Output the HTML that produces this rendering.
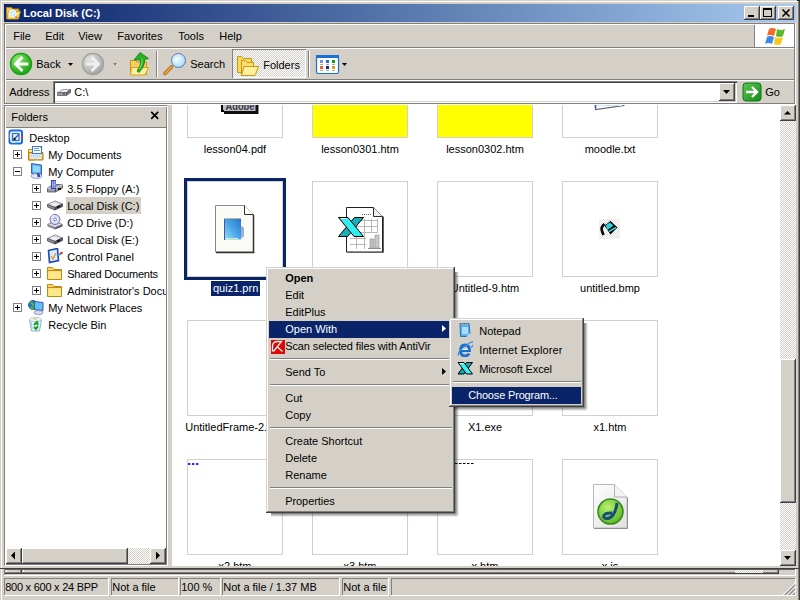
<!DOCTYPE html>
<html><head><meta charset="utf-8">
<style>
*{margin:0;padding:0;box-sizing:border-box}
html,body{width:800px;height:600px;overflow:hidden;background:#d4d0c8;font:11px "Liberation Sans",sans-serif;color:#000}
.a{position:absolute}
.t{position:absolute;line-height:12px;white-space:nowrap;margin-left:-0.8px}
.tc{margin-left:0}
.hl{position:absolute;background:#fff}
.sh{position:absolute;background:#808080}
.dk{position:absolute;background:#404040}
.chk{background:repeating-conic-gradient(#fff 0 25%,#d4d0c8 0 50%) 0 0/2px 2px}
.btn{position:absolute;background:#d4d0c8;box-shadow:inset -1px -1px #404040,inset 1px 1px #fff,inset -2px -2px #808080,inset 2px 2px #d4d0c8}
.pb{position:absolute;box-shadow:inset -1px -1px #fff,inset 1px 1px #808080}
</style></head><body>
<!-- window frame -->
<div class="hl" style="left:1px;top:1px;width:797px;height:1px"></div>
<div class="hl" style="left:1px;top:1px;width:1px;height:599px"></div>
<div class="sh" style="left:798px;top:0;width:1px;height:600px"></div>
<div class="dk" style="left:799px;top:0;width:1px;height:600px"></div>
<div class="a" style="left:797px;top:0;width:3px;height:1px;background:#202020"></div>

<!-- title bar -->
<div class="a" style="left:4px;top:4px;width:792px;height:18px;background:linear-gradient(to right,#0a246a,#a6caf0)"></div>
<svg class="a" style="left:5px;top:5px" width="17" height="16" viewBox="0 0 17 16">
 <path d="M1.5 2.5h5l1 1.5h6.5v9.5h-12.5z" fill="#f0c850" stroke="#b88818" stroke-width="1"/>
 <path d="M3.5 6.5h12l-2.5 7.5h-11z" fill="#f8e070" stroke="#c89818" stroke-width="1"/>
 <circle cx="7.5" cy="8.5" r="3.6" fill="#c8ecfc" stroke="#f8f8f8" stroke-width="1"/>
 <path d="M6 10l3-3" stroke="#fff" stroke-width="1"/>
 <path d="M10.5 11.5l1.5 1.5" stroke="#e05030" stroke-width="1.2"/>
</svg>
<div class="t" style="left:24px;top:7px;color:#fff;font-weight:bold">Local Disk (C:)</div>
<div class="btn" style="left:744px;top:6px;width:16px;height:14px"></div>
<div class="a" style="left:748px;top:15px;width:6px;height:2px;background:#000"></div>
<div class="btn" style="left:760px;top:6px;width:16px;height:14px"></div>
<div class="a" style="left:763px;top:8px;width:9px;height:9px;border:1px solid #000;border-top-width:2px"></div>
<div class="btn" style="left:778px;top:6px;width:16px;height:14px"></div>
<svg class="a" style="left:778px;top:6px" width="16" height="14" viewBox="0 0 16 14">
 <path d="M4.5 3.5l7 7M11.5 3.5l-7 7" stroke="#000" stroke-width="1.6"/>
</svg>

<!-- rebar bands -->
<div class="sh" style="left:4px;top:23px;width:791px;height:1px"></div>
<div class="hl" style="left:5px;top:24px;width:790px;height:1px"></div>
<div class="sh" style="left:4px;top:23px;width:1px;height:82px"></div>
<div class="hl" style="left:5px;top:24px;width:1px;height:81px"></div>
<div class="sh" style="left:794px;top:23px;width:1px;height:82px"></div>
<div class="hl" style="left:795px;top:23px;width:1px;height:82px"></div>
<div class="sh" style="left:6px;top:47px;width:788px;height:1px"></div>
<div class="hl" style="left:6px;top:48px;width:788px;height:1px"></div>
<div class="sh" style="left:6px;top:79px;width:788px;height:1px"></div>
<div class="hl" style="left:6px;top:80px;width:788px;height:1px"></div>
<div class="sh" style="left:4px;top:103px;width:791px;height:1px"></div>
<div class="hl" style="left:4px;top:104px;width:791px;height:1px"></div>

<!-- menu bar -->
<div class="t" style="left:14px;top:30px">File</div>
<div class="t" style="left:46px;top:30px">Edit</div>
<div class="t" style="left:79px;top:30px">View</div>
<div class="t" style="left:118px;top:30px">Favorites</div>
<div class="t" style="left:179px;top:30px">Tools</div>
<div class="t" style="left:220px;top:30px">Help</div>
<div class="sh" style="left:754px;top:25px;width:1px;height:22px"></div>
<div class="hl" style="left:755px;top:25px;width:1px;height:22px"></div>
<div class="a" style="left:756px;top:24px;width:38px;height:23px;background:#fff"></div>
<div class="sh" style="left:756px;top:23px;width:38px;height:1px"></div>
<div class="sh" style="left:756px;top:47px;width:38px;height:1px"></div>
<svg class="a" style="left:765px;top:26px" width="22" height="20" viewBox="0 0 22 20">
 <path d="M4 3q3-2 7 0l-2 7q-4-2-7 0z" fill="#f06a28"/>
 <path d="M12 3q4 2 8 0l-2 7q-4 2-7 0z" fill="#5cb82c"/>
 <path d="M2 11q3-2 7 0l-2 7q-4-2-7 0z" fill="#3a8ce8"/>
 <path d="M10 11q4 2 8 0l-2 7q-4 2-7 0z" fill="#f8c820"/>
</svg>

<!-- toolbar -->

<svg class="a" style="left:0;top:49px" width="360" height="30" viewBox="0 49 360 30">
 <defs>
  <radialGradient id="gb" cx="0.35" cy="0.3" r="0.8"><stop offset="0" stop-color="#9ee878"/><stop offset="0.6" stop-color="#3cb82a"/><stop offset="1" stop-color="#1a9a14"/></radialGradient>
  <radialGradient id="gg" cx="0.35" cy="0.3" r="0.8"><stop offset="0" stop-color="#e4e4e4"/><stop offset="0.7" stop-color="#b4b4b4"/><stop offset="1" stop-color="#9a9a9a"/></radialGradient>
  <linearGradient id="fy" x1="0" y1="0" x2="1" y2="1"><stop offset="0" stop-color="#fff0a0"/><stop offset="1" stop-color="#f0c040"/></linearGradient>
  <radialGradient id="lens" cx="0.4" cy="0.4" r="0.7"><stop offset="0" stop-color="#f4fcff"/><stop offset="0.7" stop-color="#b8e4f8"/><stop offset="1" stop-color="#90c8e8"/></radialGradient>
 </defs>
 <!-- back -->
 <circle cx="21" cy="64" r="10.6" fill="url(#gb)" stroke="#14a014" stroke-width="1.2"/>
 <path d="M21.5 58L15.5 64L21.5 70M16 64H27" fill="none" stroke="#fff" stroke-width="2.8" stroke-linecap="square"/>
 <path d="M68 63h5l-2.5 3z" fill="#000"/>
 <!-- forward -->
 <circle cx="93" cy="64" r="10.6" fill="url(#gg)" stroke="#a0a0a0" stroke-width="1.2"/>
 <path d="M92.5 58L98.5 64L92.5 70M87 64H98" fill="none" stroke="#f0f0f0" stroke-width="2.8" stroke-linecap="square"/>
 <path d="M113 63h5l-2.5 3z" fill="#808080"/>
 <path d="M116 66l2-3" stroke="#fff" stroke-width="1"/>
 <!-- up -->
 <path d="M130.5 60.5h5l1.5 1.5h9.5v12.5h-16z" fill="#f4d060" stroke="#d09810" stroke-width="1"/>
 <path d="M131.5 67.5h17l-3.5 7.5h-14.5z" fill="#fdeea0" stroke="#d8a018" stroke-width="1"/>
 <path d="M134 60L140 52.5L148.5 58.5L144.5 59.5Q145 66.5 139 72.5L137 71Q141.5 65.5 140.5 60z" fill="#28b028" stroke="#0a800a" stroke-width="0.8"/>
 <path d="M142 58.5Q143 64 139.5 69" fill="none" stroke="#80e070" stroke-width="1"/>
 <!-- separators -->
 <rect x="156" y="51" width="1" height="26" fill="#808080"/><rect x="157" y="51" width="1" height="26" fill="#fff"/>
 <!-- search -->
 <path d="M165 73.5L171.5 67" stroke="#a05a20" stroke-width="3.6" stroke-linecap="round"/>
 <path d="M165 73.5L171.5 67" stroke="#f0a030" stroke-width="2.2" stroke-linecap="round"/>
 <circle cx="178.5" cy="60.5" r="7" fill="url(#lens)" stroke="#5878b8" stroke-width="1"/>
 <!-- folders pressed -->
 <rect x="308" y="51" width="1" height="26" fill="#808080"/><rect x="309" y="51" width="1" height="26" fill="#fff"/>
 <!-- views -->
 <rect x="316.5" y="55.5" width="22" height="18" rx="1.5" fill="#fff" stroke="#1870d8" stroke-width="1.2"/>
 <rect x="316" y="55" width="23" height="3" fill="#1870d8"/>
 <rect x="320" y="60" width="3" height="3" fill="#8890d0"/><rect x="326" y="60" width="3" height="3" fill="#1078e0"/><rect x="332" y="60" width="3" height="3" fill="#10a010"/>
 <rect x="320" y="66" width="3" height="3" fill="#f06030"/><rect x="326" y="66" width="3" height="3" fill="#202880"/><rect x="332" y="66" width="3" height="3" fill="#d8a018"/>
 <rect x="320" y="64" width="3" height="1" fill="#aaa"/><rect x="326" y="64" width="3" height="1" fill="#aaa"/><rect x="332" y="64" width="3" height="1" fill="#aaa"/>
 <rect x="320" y="70" width="3" height="1" fill="#aaa"/><rect x="326" y="70" width="3" height="1" fill="#aaa"/><rect x="332" y="70" width="3" height="1" fill="#aaa"/>
 <path d="M342 63h5l-2.5 3z" fill="#000"/>
</svg>
<div class="a chk" style="left:232px;top:49px;width:74px;height:29px;box-shadow:inset 1px 1px #808080,inset -1px -1px #fff"></div>
<svg class="a" style="left:233px;top:49px" width="30" height="30" viewBox="233 49 30 30">
 <path d="M237.5 56.5h4l1.5 2h8.5v14h-14z" fill="#f8d860" stroke="#d09810" stroke-width="1"/>
 <path d="M241.5 60.5h4l1.5 2h6.5v13h-12z" fill="#f8e070" stroke="#d09810" stroke-width="1"/>
 <path d="M244 66.5h14.5l-3.5 9h-13.5z" fill="#fff0a0" stroke="#d09810" stroke-width="1"/>
</svg>
<div class="t" style="left:37px;top:58px">Back</div>
<div class="t" style="left:191px;top:58px">Search</div>
<div class="t" style="left:264px;top:59px">Folders</div>


<!-- address bar -->
<div class="t" style="left:10px;top:86px">Address</div>
<div class="a" style="left:53px;top:81px;width:684px;height:22px;background:#fff;box-shadow:inset 1px 1px #808080,inset 2px 2px #404040,inset -1px -1px #fff,inset -2px -2px #d4d0c8"></div>
<div class="btn" style="left:719px;top:83px;width:16px;height:18px"></div>
<svg class="a" style="left:723px;top:90px" width="7" height="4" viewBox="0 0 7 4"><path d="M0 0h7L3.5 4z" fill="#000"/></svg>
<svg class="a" style="left:56px;top:84px" width="16" height="16" viewBox="0 0 16 16"><path d="M1.5 8.5l5-3h8l-4 3z" fill="#e8e8ec" stroke="#909098" stroke-width="0.8"/><path d="M1.5 8.5h9v3h-9z" fill="#9898a0" stroke="#606068" stroke-width="0.8"/><path d="M10.5 8.5l4-3v3l-4 3z" fill="#707078" stroke="#505058" stroke-width="0.8"/><rect x="7" y="9.5" width="2" height="1" fill="#303030"/></svg>
<div class="t" style="left:75px;top:86px">C:\</div>
<svg class="a" style="left:742px;top:82px" width="20" height="20" viewBox="0 0 20 20">
<defs><linearGradient id="gog" x1="0" y1="0" x2="1" y2="1"><stop offset="0" stop-color="#5cc858"/><stop offset="1" stop-color="#128a12"/></linearGradient></defs>
<rect x="1" y="1" width="18" height="18" rx="3" fill="url(#gog)" stroke="#0a7a0a" stroke-width="1"/>
<path d="M4 10h10M10 5l5 5-5 5" fill="none" stroke="#fff" stroke-width="2.4"/>
</svg>
<div class="t" style="left:766px;top:86px">Go</div>

<!-- folders pane -->
<div class="a" style="left:4px;top:105px;width:163px;height:460px;border:1px solid #808080"></div>
<div class="a" style="left:5px;top:106px;width:163px;height:460px;border:1px solid #fff;border-right-color:#fff"></div>
<div class="a" style="left:6px;top:128px;width:160px;height:420px;background:#fff;overflow:hidden">
</div>
<div class="sh" style="left:6px;top:127px;width:160px;height:1px"></div>
<div class="t" style="left:12px;top:111px">Folders</div>
<svg class="a" style="left:150px;top:111px" width="10" height="9" viewBox="0 0 10 9"><path d="M1.2 0.8l7 7M8.2 0.8l-7 7" stroke="#000" stroke-width="1.7"/></svg>
<div class="a" style="left:6px;top:128px;width:160px;height:420px;overflow:hidden">
<svg class="a" style="left:2px;top:1px" width="16" height="16" viewBox="0 0 16 16"><rect x="1.5" y="1.5" width="12.5" height="13" rx="2" fill="#fff" stroke="#1a6ae0" stroke-width="2"/><path d="M3 4q-1 5 1 8 1 1 3 1" fill="none" stroke="#f4eeb0" stroke-width="2"/><rect x="4.5" y="4.5" width="6.5" height="7" fill="#e8f0ff" stroke="#2a70e0" stroke-width="1.3"/><path d="M6 10l5-4.5" stroke="#2a60c0" stroke-width="1.5"/><rect x="5.5" y="9" width="2" height="2" fill="#000"/><path d="M14 6.5l1.5 1.5-1.5 1.5-1.5-1.5z" fill="#e84010"/></svg>
<div class="t" style="left:24px;top:4px">Desktop</div>
<svg class="a" style="left:22px;top:18px" width="16" height="16" viewBox="0 0 16 16"><path d="M0.5 3.5h3l1-1h1v11.5h-5z" fill="#f8e8a0" stroke="#c89018"/><path d="M0.5 6.5h14.5v7.5h-14.5z" fill="#f0c040" stroke="#b88010"/><rect x="4.5" y="0.5" width="9" height="7" fill="#fff" stroke="#3a78d8"/><path d="M6 2.5h5M6 4.5h6" stroke="#70a0e0"/><path d="M12 0.5l2 2" stroke="#3a78d8"/><rect x="2" y="8" width="11.5" height="5" fill="#d8e8f8"/><path d="M3 10h9" stroke="#a0c0e8" stroke-dasharray="1 1"/></svg>
<div class="t" style="left:43px;top:21px">My Documents</div>
<div class="a" style="left:7px;top:22px;width:9px;height:9px;border:1px solid #808080;background:#fff"></div><div class="a" style="left:9px;top:26px;width:5px;height:1px;background:#000"></div><div class="a" style="left:11px;top:24px;width:1px;height:5px;background:#000"></div>
<svg class="a" style="left:22px;top:35px" width="16" height="16" viewBox="0 0 16 16"><path d="M3.5 0.5l10 1.5v9.5l-10-1z" fill="#50b0f8" stroke="#4060b0"/><path d="M5 2.5l7 1v6l-7-0.8z" fill="#90d8fc"/><ellipse cx="8.5" cy="13" rx="5.5" ry="2.5" fill="#e0e4f4" stroke="#8088c0" stroke-width="0.8"/><path d="M10 10l1 4" stroke="#3040a0" stroke-width="2.5"/></svg>
<div class="t" style="left:43px;top:38px">My Computer</div>
<div class="a" style="left:7px;top:39px;width:9px;height:9px;border:1px solid #808080;background:#fff"></div><div class="a" style="left:9px;top:43px;width:5px;height:1px;background:#000"></div>
<svg class="a" style="left:41px;top:52px" width="16" height="16" viewBox="0 0 16 16"><path d="M0.5 8l6-3.5h9v3.5l-7 4H0.5z" fill="#9a9aa4" stroke="#505060" stroke-width="0.8"/><path d="M0.5 8h8l7-3.5" fill="none" stroke="#e0e0ea" stroke-width="1"/><path d="M8.5 8v4" stroke="#404050" stroke-width="0.8"/><rect x="4" y="0" width="5" height="9" fill="#3848b8"/><rect x="5" y="1" width="1.5" height="7" fill="#9aa8f0"/><rect x="7" y="1" width="1.5" height="7" fill="#9aa8f0"/><rect x="5" y="4" width="3.5" height="1.5" fill="#9aa8f0"/><rect x="11" y="8" width="3" height="2" fill="#181818"/></svg>
<div class="t" style="left:62px;top:55px">3.5 Floppy (A:)</div>
<div class="a" style="left:26px;top:56px;width:9px;height:9px;border:1px solid #808080;background:#fff"></div><div class="a" style="left:28px;top:60px;width:5px;height:1px;background:#000"></div><div class="a" style="left:30px;top:58px;width:1px;height:5px;background:#000"></div>
<div class="a" style="left:60px;top:69px;width:75px;height:17px;background:#d4d0c8"></div>
<svg class="a" style="left:41px;top:69px" width="16" height="16" viewBox="0 0 16 16"><path d="M0.5 7.5L8 4l7.5 3L8 10.5z" fill="#e4e4ea" stroke="#707078" stroke-width="0.8"/><path d="M0.5 7.5L8 10.5v2.5L0.5 10z" fill="#8c8c94" stroke="#505058" stroke-width="0.8"/><path d="M8 10.5l7.5-3.5v2.5L8 13z" fill="#5c5c64" stroke="#404048" stroke-width="0.8"/><path d="M10 10.5l3-1.5" stroke="#101018" stroke-width="1.5"/><path d="M4 6.5l6 2" stroke="#fff" stroke-width="1"/></svg>
<div class="t" style="left:62px;top:72px">Local Disk (C:)</div>
<div class="a" style="left:26px;top:73px;width:9px;height:9px;border:1px solid #808080;background:#fff"></div><div class="a" style="left:28px;top:77px;width:5px;height:1px;background:#000"></div><div class="a" style="left:30px;top:75px;width:1px;height:5px;background:#000"></div>
<svg class="a" style="left:41px;top:86px" width="16" height="16" viewBox="0 0 16 16"><path d="M0.5 10.5L8 7.5l7.5 3L8 13.5z" fill="#e0e0e8" stroke="#707078" stroke-width="0.8"/><path d="M0.5 10.5L8 13.5v2L0.5 12.5z" fill="#8c8c94"/><path d="M8 13.5l7.5-3v2L8 15.5z" fill="#5c5c64"/><circle cx="8" cy="5.5" r="5" fill="#dce0f8" stroke="#6870b0" stroke-width="1"/><path d="M5 3q1-1.5 3-1.5" stroke="#fff" stroke-width="1.2" fill="none"/><circle cx="8" cy="5.5" r="1.4" fill="#fff" stroke="#6870b0" stroke-width="0.8"/></svg>
<div class="t" style="left:62px;top:89px">CD Drive (D:)</div>
<div class="a" style="left:26px;top:90px;width:9px;height:9px;border:1px solid #808080;background:#fff"></div><div class="a" style="left:28px;top:94px;width:5px;height:1px;background:#000"></div><div class="a" style="left:30px;top:92px;width:1px;height:5px;background:#000"></div>
<svg class="a" style="left:41px;top:103px" width="16" height="16" viewBox="0 0 16 16"><path d="M0.5 7.5L8 4l7.5 3L8 10.5z" fill="#e4e4ea" stroke="#707078" stroke-width="0.8"/><path d="M0.5 7.5L8 10.5v2.5L0.5 10z" fill="#8c8c94" stroke="#505058" stroke-width="0.8"/><path d="M8 10.5l7.5-3.5v2.5L8 13z" fill="#5c5c64" stroke="#404048" stroke-width="0.8"/><path d="M10 10.5l3-1.5" stroke="#101018" stroke-width="1.5"/><path d="M4 6.5l6 2" stroke="#fff" stroke-width="1"/></svg>
<div class="t" style="left:62px;top:106px">Local Disk (E:)</div>
<div class="a" style="left:26px;top:107px;width:9px;height:9px;border:1px solid #808080;background:#fff"></div><div class="a" style="left:28px;top:111px;width:5px;height:1px;background:#000"></div><div class="a" style="left:30px;top:109px;width:1px;height:5px;background:#000"></div>
<svg class="a" style="left:41px;top:120px" width="16" height="16" viewBox="0 0 16 16"><path d="M1.5 2.5l9-2 1 12-9 2z" fill="#dce8fc" stroke="#1848b0" stroke-width="1.6"/><path d="M4 8l2 3 3-6" stroke="#e89020" stroke-width="1.3" fill="none"/><path d="M10 8l4-2.5" stroke="#3a90e0" stroke-width="1.5"/><circle cx="14.5" cy="5" r="1.3" fill="#e83010"/></svg>
<div class="t" style="left:62px;top:123px">Control Panel</div>
<div class="a" style="left:26px;top:124px;width:9px;height:9px;border:1px solid #808080;background:#fff"></div><div class="a" style="left:28px;top:128px;width:5px;height:1px;background:#000"></div><div class="a" style="left:30px;top:126px;width:1px;height:5px;background:#000"></div>
<svg class="a" style="left:41px;top:137px" width="16" height="16" viewBox="0 0 16 16"><path d="M0.5 2.5h5l1.5 2h7.5v10h-14z" fill="#f8d868" stroke="#c08a10"/><path d="M1.5 6.5h12.5v7.5h-12.5z" fill="#fce888"/><path d="M1 5.5h13.5" stroke="#c08a10" stroke-width="1"/></svg>
<div class="t" style="left:62px;top:140px;letter-spacing:-0.22px">Shared Documents</div>
<div class="a" style="left:26px;top:141px;width:9px;height:9px;border:1px solid #808080;background:#fff"></div><div class="a" style="left:28px;top:145px;width:5px;height:1px;background:#000"></div><div class="a" style="left:30px;top:143px;width:1px;height:5px;background:#000"></div>
<svg class="a" style="left:41px;top:154px" width="16" height="16" viewBox="0 0 16 16"><path d="M0.5 2.5h5l1.5 2h7.5v10h-14z" fill="#f8d868" stroke="#c08a10"/><path d="M1.5 6.5h12.5v7.5h-12.5z" fill="#fce888"/><path d="M1 5.5h13.5" stroke="#c08a10" stroke-width="1"/></svg>
<div class="t" style="left:62px;top:157px">Administrator's Documents</div>
<div class="a" style="left:26px;top:158px;width:9px;height:9px;border:1px solid #808080;background:#fff"></div><div class="a" style="left:28px;top:162px;width:5px;height:1px;background:#000"></div><div class="a" style="left:30px;top:160px;width:1px;height:5px;background:#000"></div>
<svg class="a" style="left:22px;top:171px" width="16" height="16" viewBox="0 0 16 16"><circle cx="5" cy="6" r="4.5" fill="#2870d0" stroke="#1850a0" stroke-width="0.8"/><path d="M2 3.5q2 0 3 2t2 1.5M3 8q1 1 2 3" stroke="#50c030" stroke-width="2" fill="none"/><path d="M6.5 2.5l8.5 1v8l-8.5-1z" fill="#60c0f8" stroke="#4058a8"/><ellipse cx="10.5" cy="13.5" rx="4.5" ry="2" fill="#d8dcf0" stroke="#7880b8" stroke-width="0.8"/></svg>
<div class="t" style="left:43px;top:174px">My Network Places</div>
<div class="a" style="left:7px;top:175px;width:9px;height:9px;border:1px solid #808080;background:#fff"></div><div class="a" style="left:9px;top:179px;width:5px;height:1px;background:#000"></div><div class="a" style="left:11px;top:177px;width:1px;height:5px;background:#000"></div>
<svg class="a" style="left:22px;top:188px" width="16" height="16" viewBox="0 0 16 16"><path d="M1.5 3.5h12l-2 11.5h-8z" fill="#e8f4fc" stroke="#90b0d0"/><ellipse cx="7.5" cy="3.5" rx="6" ry="2" fill="#f0f8fc" stroke="#a0c0d8" stroke-width="0.8"/><path d="M5 3h4" stroke="#e8d080" stroke-width="1.5"/><path d="M6 9l3-3 1 3M10 10l-2 3-2-2" stroke="#10a020" stroke-width="2" fill="none"/><path d="M3 6l1 7" stroke="#b8c8f0" stroke-width="1.5"/></svg>
<div class="t" style="left:43px;top:191px">Recycle Bin</div>
</div>
<div class="a chk" style="left:6px;top:548px;width:160px;height:16px"></div>
<div class="btn" style="left:6px;top:548px;width:16px;height:16px"></div>
<svg class="a" style="left:6px;top:548px" width="16" height="16" viewBox="0 0 16 16"><path d="M5 7.5L9 3.5v8z" fill="#000"/></svg>
<div class="btn" style="left:22px;top:548px;width:106px;height:16px"></div>
<div class="btn" style="left:150px;top:548px;width:16px;height:16px"></div>
<svg class="a" style="left:150px;top:548px" width="16" height="16" viewBox="0 0 16 16"><path d="M10 7.5L6 3.5v8z" fill="#000"/></svg>
<!-- content -->
<div class="a" style="left:172px;top:105px;width:608px;height:461px;background:#fff;overflow:hidden">
<div class="a" style="left:15px;top:-63px;width:96px;height:96px;border:1px solid #d4d0c8;background:#fff"></div>
<div class="t tc" style="left:0px;top:38px;width:126px;text-align:center">lesson04.pdf</div>
<div class="a" style="left:140px;top:-63px;width:96px;height:96px;border:1px solid #d4d0c8;background:#ffff00"></div>
<div class="t tc" style="left:125px;top:38px;width:126px;text-align:center">lesson0301.htm</div>
<div class="a" style="left:265px;top:-63px;width:96px;height:96px;border:1px solid #d4d0c8;background:#ffff00"></div>
<div class="t tc" style="left:250px;top:38px;width:126px;text-align:center">lesson0302.htm</div>
<div class="a" style="left:390px;top:-63px;width:96px;height:96px;border:1px solid #d4d0c8;background:#fff"></div>
<div class="t tc" style="left:375px;top:38px;width:126px;text-align:center">moodle.txt</div>
<div class="a" style="left:15px;top:76px;width:96px;height:96px;border:1px solid #d4d0c8;background:#fff"></div>
<div class="a" style="left:12px;top:73px;width:102px;height:102px;border:3px solid #0a246a"></div>
<div class="t tc" style="left:39px;top:176px;height:15px;padding:1px 2px 0 2px;background:#0a246a;color:#fff;line-height:13px">quiz1.prn</div>
<div class="a" style="left:140px;top:76px;width:96px;height:96px;border:1px solid #d4d0c8;background:#fff"></div>
<div class="t tc" style="left:125px;top:177px;width:126px;text-align:center">Book1.xls</div>
<div class="a" style="left:265px;top:76px;width:96px;height:96px;border:1px solid #d4d0c8;background:#fff"></div>
<div class="t tc" style="left:250px;top:177px;width:126px;text-align:center">Untitled-9.htm</div>
<div class="a" style="left:390px;top:76px;width:96px;height:96px;border:1px solid #d4d0c8;background:#fff"></div>
<div class="t tc" style="left:375px;top:177px;width:126px;text-align:center">untitled.bmp</div>
<div class="a" style="left:15px;top:215px;width:96px;height:96px;border:1px solid #d4d0c8;background:#fff"></div>
<div class="t" style="left:14px;top:316px">UntitledFrame-2.</div>
<div class="a" style="left:140px;top:215px;width:96px;height:96px;border:1px solid #d4d0c8;background:#fff"></div>
<div class="t tc" style="left:125px;top:316px;width:126px;text-align:center">X1.xls</div>
<div class="a" style="left:265px;top:215px;width:96px;height:96px;border:1px solid #d4d0c8;background:#fff"></div>
<div class="t tc" style="left:250px;top:316px;width:126px;text-align:center">X1.exe</div>
<div class="a" style="left:390px;top:215px;width:96px;height:96px;border:1px solid #d4d0c8;background:#fff"></div>
<div class="t tc" style="left:375px;top:316px;width:126px;text-align:center">x1.htm</div>
<div class="a" style="left:15px;top:354px;width:96px;height:96px;border:1px solid #d4d0c8;background:#fff"></div>
<div class="t tc" style="left:0px;top:455px;width:126px;text-align:center">x2.htm</div>
<div class="a" style="left:140px;top:354px;width:96px;height:96px;border:1px solid #d4d0c8;background:#fff"></div>
<div class="t tc" style="left:125px;top:455px;width:126px;text-align:center">x3.htm</div>
<div class="a" style="left:265px;top:354px;width:96px;height:96px;border:1px solid #d4d0c8;background:#fff"></div>
<div class="t tc" style="left:250px;top:455px;width:126px;text-align:center">x.htm</div>
<div class="a" style="left:390px;top:354px;width:96px;height:96px;border:1px solid #d4d0c8;background:#fff"></div>
<div class="t tc" style="left:375px;top:455px;width:126px;text-align:center">x.js</div>
<svg class="a" style="left:48px;top:0" width="42" height="12" viewBox="220 105 42 12">
<rect x="223" y="103" width="33" height="8" fill="#c0c0c8"/>
<path d="M222 103v8h2" fill="none" stroke="#000" stroke-width="2"/>
<path d="M224 112.5h33v-9.5" fill="none" stroke="#101010" stroke-width="3"/>
<text x="225.5" y="109.5" font-family="Liberation Sans" font-weight="bold" font-size="10" fill="#383840" textLength="29" lengthAdjust="spacingAndGlyphs">Adobe</text>
</svg>
<svg class="a" style="left:418px;top:0" width="40" height="10" viewBox="590 105 40 10">
<path d="M595.5 105v4.5l29-4" fill="none" stroke="#606070" stroke-width="1.2"/><path d="M596 105h26" stroke="#d0e8f8" stroke-width="2"/><path d="M595.5 105v3" stroke="#4050c0" stroke-width="1.5"/>
</svg>
<svg class="a" style="left:42px;top:99px" width="42" height="50" viewBox="214 204 42 50">
<defs><linearGradient id="npg" x1="0" y1="1" x2="1" y2="0"><stop offset="0" stop-color="#9ae0f8"/><stop offset="0.5" stop-color="#48a8e8"/><stop offset="1" stop-color="#2a70d0"/></linearGradient></defs>
<path d="M215.5 205.5h29l9 9v37.5h-38z" fill="#fcfcf6" stroke="#888"/>
<path d="M244.5 205.5v9h9" fill="#fff" stroke="#303030"/>
<path d="M216 252.5h38.5M253.5 215v38" stroke="#303030" stroke-width="1.5"/>
<rect x="224" y="218.5" width="17" height="21" fill="url(#npg)"/>
<path d="M224.5 219v21" stroke="#5050a0" stroke-width="1"/>
<path d="M226 218.5h14" stroke="#e8a040" stroke-width="1.2" stroke-dasharray="1 1"/>
<path d="M241 226l3 1.5v9l-3 2z" fill="#9ab0d8"/>
<path d="M226 238.5h12" stroke="#c8f0c0" stroke-width="1"/>
</svg>
<svg class="a" style="left:164px;top:100px" width="50" height="50" viewBox="336 205 50 50">
<path d="M346.5 207.5h27l9 9v35.5h-36z" fill="#fff" stroke="#202020"/>
<path d="M347 252.5h36.5v-36" fill="none" stroke="#606060"/>
<path d="M373.5 207.5v9h9" fill="#f0f0f0" stroke="#303030"/>
<path d="M350 220.5h28M350 226.5h28M350 232.5h28M350 238.5h16M350 244.5h16M356.5 219v30M364.5 219v30M371.5 219v14M377.5 219v14" stroke="#b8b8b8" stroke-width="1"/>
<path d="M362 214.5h9" stroke="#606060" stroke-dasharray="1 1"/>
<rect x="370" y="239" width="4" height="9" fill="#c0c0c0" stroke="#909090" stroke-width="0.6"/><rect x="375" y="235" width="4" height="13" fill="#c8c8c8" stroke="#909090" stroke-width="0.6"/>
<path d="M368 248.5h13" stroke="#909090"/>
<path d="M363.5 217.5h-9l-16 19h9z" fill="#18b0b8" stroke="#000" stroke-width="1"/><path d="M338.5 217.5h9.5l15.5 19h-9.5z" fill="#30eef0" stroke="#000" stroke-width="1"/><path d="M341 218.5h5.5" stroke="#fff"/>
</svg>
<div class="a chk" style="left:427px;top:114px;width:21px;height:20px;opacity:0.6"></div>
<svg class="a" style="left:427px;top:114px" width="21" height="20" viewBox="599 219 21 20">
<path d="M604 225L610 220.5L617.5 227.5L610.5 234.5z" fill="#000"/>
<path d="M605.5 225.5L610 222.5L613.5 225.5L607.5 230z" fill="#30d0d8"/>
<path d="M609 231.5L616 227.5" stroke="#30d0d8" stroke-width="1.6"/>
<path d="M604.5 225L610 221" stroke="#fff" stroke-width="1"/>
<path d="M604.5 224Q600.5 227 602 231L603.5 235" fill="none" stroke="#000" stroke-width="2.6"/>
</svg>
<div class="a" style="left:16px;top:358px;width:11px;height:2px;background:repeating-linear-gradient(90deg,#2030ff 0 2px,#a0a8ff 2px 3px,#fff 3px 4px)"></div>
<div class="a" style="left:283px;top:358px;width:20px;height:1px;background:repeating-linear-gradient(90deg,#000 0 2px,#888 2px 3px,#fff 3px 4px)"></div>
<svg class="a" style="left:420px;top:378px" width="37" height="47" viewBox="592 483 37 47">
<defs><radialGradient id="dwg" cx="0.4" cy="0.35" r="0.7"><stop offset="0" stop-color="#b8f070"/><stop offset="1" stop-color="#58b820"/></radialGradient>
<linearGradient id="pg" x1="0" y1="0" x2="1" y2="1"><stop offset="0" stop-color="#fff"/><stop offset="1" stop-color="#e0e0e0"/></linearGradient></defs>
<path d="M593.5 484.5h21l12.5 12.5v31h-33.5z" fill="url(#pg)" stroke="#b8b8b8"/><path d="M594 528.5h33.5v-31" fill="none" stroke="#909090"/>
<path d="M614.5 484.5v12.5h12.5" fill="#f4f4f4" stroke="#b0b0b0"/>
<circle cx="610.5" cy="511.5" r="12.5" fill="url(#dwg)" stroke="#3a8a20" stroke-width="1.6"/>
<path d="M617 503q-1 8-4 12q-3 4-7 3.5q-3-0.5-2-3q1.5-3 8-2.5" fill="none" stroke="#1a4a7a" stroke-width="3"/>
</svg>
</div>
<div class="a chk" style="left:780px;top:105px;width:16px;height:461px"></div>
<div class="btn" style="left:780px;top:105px;width:16px;height:16px"></div>
<svg class="a" style="left:780px;top:105px" width="16" height="16" viewBox="0 0 16 16"><path d="M4 9.5h7L7.5 6z" fill="#000"/></svg>
<div class="btn" style="left:780px;top:359px;width:16px;height:144px"></div>
<div class="btn" style="left:780px;top:550px;width:16px;height:16px"></div>
<svg class="a" style="left:780px;top:550px" width="16" height="16" viewBox="0 0 16 16"><path d="M4 6h7l-3.5 4z" fill="#000"/></svg>
<!-- menus -->
<div class="a" style="left:455px;top:272px;width:4px;height:241px;background:linear-gradient(to right,rgba(0,0,0,.55),rgba(0,0,0,0))"></div>
<div class="a" style="left:271px;top:513px;width:184px;height:4px;background:linear-gradient(to bottom,rgba(0,0,0,.55),rgba(0,0,0,0))"></div>
<div class="a" style="left:455px;top:513px;width:4px;height:4px;background:radial-gradient(circle at 0 0,rgba(0,0,0,.5),rgba(0,0,0,0) 4.5px)"></div>
<div class="a" style="left:266px;top:267px;width:189px;height:246px;background:#d4d0c8;box-shadow:inset -1px -1px #404040,inset 1px 1px #d4d0c8,inset -2px -2px #808080,inset 2px 2px #fff"></div>
<div class="t" style="left:286px;top:272px;color:#000;font-weight:bold;">Open</div>
<div class="t" style="left:286px;top:289px;color:#000;">Edit</div>
<div class="t" style="left:286px;top:306px;color:#000;">EditPlus</div>
<div class="a" style="left:269px;top:321px;width:183px;height:17px;background:#0a246a"></div>
<div class="t" style="left:286px;top:323px;color:#fff;">Open With</div>
<svg class="a" style="left:442px;top:325px" width="4" height="7" viewBox="0 0 4 7"><path d="M0 0L4 3.5L0 7z" fill="#fff"/></svg>
<div class="t" style="left:286px;top:340px;color:#000;;letter-spacing:-0.11px">Scan selected files with AntiVir</div>
<svg class="a" style="left:271px;top:340px" width="14" height="14" viewBox="0 0 14 14"><rect width="14" height="14" fill="#dc0808"/><path d="M1.5 11.5V6.5Q1.5 1.5 6.5 1.5H10.5L2.5 11.5M6.5 7L11.5 11.5" fill="none" stroke="#e8f4f0" stroke-width="1.3"/></svg>
<div class="sh" style="left:270px;top:358px;width:182px;height:1px"></div>
<div class="hl" style="left:270px;top:359px;width:182px;height:1px"></div>
<div class="t" style="left:286px;top:366px;color:#000;">Send To</div>
<svg class="a" style="left:442px;top:368px" width="4" height="7" viewBox="0 0 4 7"><path d="M0 0L4 3.5L0 7z" fill="#000"/></svg>
<div class="sh" style="left:270px;top:384px;width:182px;height:1px"></div>
<div class="hl" style="left:270px;top:385px;width:182px;height:1px"></div>
<div class="t" style="left:286px;top:392px;color:#000;">Cut</div>
<div class="t" style="left:286px;top:409px;color:#000;">Copy</div>
<div class="sh" style="left:270px;top:427px;width:182px;height:1px"></div>
<div class="hl" style="left:270px;top:428px;width:182px;height:1px"></div>
<div class="t" style="left:286px;top:435px;color:#000;">Create Shortcut</div>
<div class="t" style="left:286px;top:452px;color:#000;">Delete</div>
<div class="t" style="left:286px;top:469px;color:#000;">Rename</div>
<div class="sh" style="left:270px;top:487px;width:182px;height:1px"></div>
<div class="hl" style="left:270px;top:488px;width:182px;height:1px"></div>
<div class="t" style="left:286px;top:495px;color:#000;;letter-spacing:-0.07px">Properties</div>
<div class="a" style="left:584px;top:323px;width:4px;height:84px;background:linear-gradient(to right,rgba(0,0,0,.55),rgba(0,0,0,0))"></div>
<div class="a" style="left:454px;top:407px;width:130px;height:4px;background:linear-gradient(to bottom,rgba(0,0,0,.55),rgba(0,0,0,0))"></div>
<div class="a" style="left:584px;top:407px;width:4px;height:4px;background:radial-gradient(circle at 0 0,rgba(0,0,0,.5),rgba(0,0,0,0) 4.5px)"></div>
<div class="a" style="left:449px;top:318px;width:135px;height:89px;background:#d4d0c8;box-shadow:inset -1px -1px #404040,inset 1px 1px #d4d0c8,inset -2px -2px #808080,inset 2px 2px #fff"></div>
<svg class="a" style="left:457px;top:322px" width="16" height="16" viewBox="0 0 16 16"><path d="M3 1.5h9l1 10-3 3H3.5z" fill="#58b0f0" stroke="#2a70c0" stroke-width="1"/><path d="M4 2h7" stroke="#f0c040" stroke-dasharray="1 1" stroke-width="1.2"/><path d="M5 5h6v7H5z" fill="#a8dcf8"/><path d="M10 14.5l3-3" stroke="#fff"/></svg>
<div class="t" style="left:480px;top:325px">Notepad</div>
<svg class="a" style="left:457px;top:341px" width="16" height="16" viewBox="0 0 16 16"><path d="M3.5 9.5h9q0-5.5-4.5-5.5t-4.5 5.5 4.5 5.5q3 0 4-2.5" fill="none" stroke="#1a70d0" stroke-width="2.8"/><path d="M5 8.5h6" stroke="#fff" stroke-width="1"/><path d="M1.5 14.5q-1.5-3 6-9t9-4q1 2-2.5 5" fill="none" stroke="#3a90e8" stroke-width="1.3"/></svg>
<div class="t" style="left:480px;top:344px;letter-spacing:0.12px">Internet Explorer</div>
<svg class="a" style="left:457px;top:360px" width="16" height="16" viewBox="0 0 16 16"><path d="M15.5 2.5h-6l-8.5 11.5h6z" fill="#18a8b0" stroke="#000" stroke-width="1"/><path d="M1 2.5h6l8.5 11.5h-6z" fill="#38f0f0" stroke="#000" stroke-width="1"/><path d="M3 3.5h3.5" stroke="#fff" stroke-width="1"/></svg>
<div class="t" style="left:480px;top:363px;letter-spacing:-0.13px">Microsoft Excel</div>
<div class="sh" style="left:453px;top:381px;width:128px;height:1px"></div>
<div class="hl" style="left:453px;top:382px;width:128px;height:1px"></div>
<div class="a" style="left:452px;top:387px;width:129px;height:17px;background:#0a246a"></div>
<div class="t" style="left:469px;top:389px;color:#fff;letter-spacing:-0.17px">Choose Program...</div>
<!-- status -->
<div class="sh" style="left:0;top:568px;width:800px;height:1px;background:#404040"></div>
<div class="sh" style="left:4px;top:569px;width:792px;height:1px;background:#606060"></div>
<div class="sh" style="left:5px;top:572px;width:790px;height:1px"></div>
<div class="dk" style="left:5px;top:573px;width:790px;height:1px"></div>
<div class="hl" style="left:4px;top:575px;width:792px;height:1px"></div>
<div class="hl" style="left:6px;top:570px;width:1px;height:2px"></div>
<div class="sh" style="left:4px;top:569px;width:1px;height:6px"></div>
<div class="sh" style="left:20px;top:570px;width:1px;height:3px"></div>
<div class="dk" style="left:21px;top:570px;width:1px;height:4px"></div>
<div class="hl" style="left:23px;top:570px;width:1px;height:2px"></div>
<div class="a chk" style="left:735px;top:570px;width:28px;height:3px"></div>
<div class="sh" style="left:777px;top:570px;width:1px;height:3px"></div>
<div class="dk" style="left:778px;top:570px;width:1px;height:4px"></div>
<div class="a" style="left:779px;top:570px;width:16px;height:5px;background:#d4d0c8"></div>
<div class="hl" style="left:795px;top:569px;width:1px;height:7px"></div>
<div class="pb" style="left:4px;top:578px;width:105px;height:18px"></div>
<div class="t" style="left:6px;top:581px;letter-spacing:-0.25px">800 x 600 x 24 BPP</div>
<div class="pb" style="left:111px;top:578px;width:68px;height:18px"></div>
<div class="t" style="left:113px;top:581px">Not a file</div>
<div class="pb" style="left:180px;top:578px;width:41px;height:18px"></div>
<div class="t" style="left:182px;top:581px">100 %</div>
<div class="pb" style="left:222px;top:578px;width:118px;height:18px"></div>
<div class="t" style="left:224px;top:581px">Not a file / 1.37 MB</div>
<div class="pb" style="left:342px;top:578px;width:47px;height:18px"></div>
<div class="t" style="left:344px;top:581px">Not a file</div>
<div class="pb" style="left:391px;top:578px;width:405px;height:18px"></div>
<svg class="a" style="left:782px;top:582px" width="14" height="14" viewBox="0 0 14 14">
<path d="M13 1L1 13M13 5L5 13M13 9L9 13" stroke="#fff" stroke-width="1"/>
<path d="M13 2.5L2.5 13M13 3.5L3.5 13M13 6.5L6.5 13M13 7.5L7.5 13M13 10.5L10.5 13M13 11.5L11.5 13" stroke="#808080" stroke-width="0.9"/>
</svg>
</body></html>
